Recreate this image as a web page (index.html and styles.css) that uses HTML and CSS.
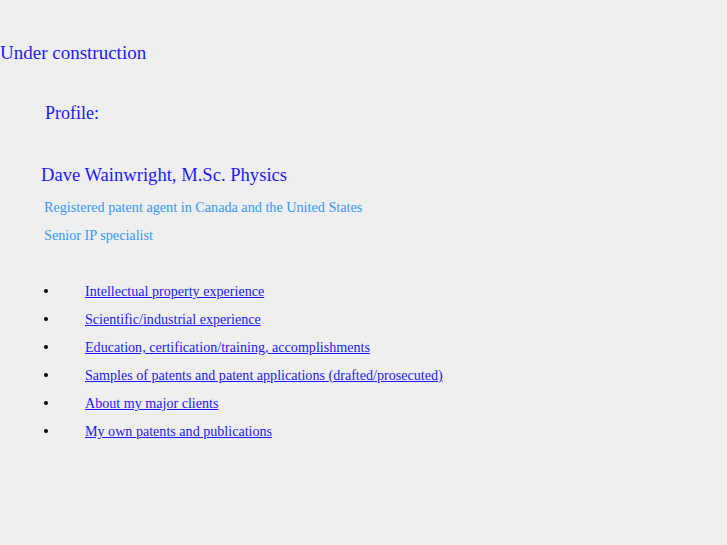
FILE: index.html
```html
<!DOCTYPE html>
<html lang="en">

<head>
    <meta charset="UTF-8" />
    <title>Dave Wainwright - Profile</title>
    <link rel="stylesheet" href="styles.css">
</head>

<body>
    <p class="notice">Under construction</p>

    <div class="profile">
        <h2>Profile:</h2>

        <h1>Dave Wainwright, M.Sc. Physics</h1>
        <p class="role">Registered patent agent in Canada and the United States</p>
        <p class="role">Senior IP specialist</p>

        <ul class="links">
            <li><a href="#">Intellectual property experience</a></li>
            <li><a href="#">Scientific/industrial experience</a></li>
            <li><a href="#">Education, certification/training, accomplishments</a></li>
            <li><a href="#">Samples of patents and patent applications (drafted/prosecuted)</a></li>
            <li><a href="#">About my major clients</a></li>
            <li><a href="#">My own patents and publications</a></li>
        </ul>
    </div>
</body>

</html>
```

FILE: styles.css
```css
* {
    box-sizing: border-box;
    margin: 0;
    padding: 0;
}

body {
    font-family: 'Liberation Serif', 'Times New Roman', serif;
    background-color: #efefef;
    color: #000;
    padding-top: 41px;
}

/* Header notice */
.notice {
    font-size: 19px;
    line-height: 24px;
    color: #1a1aff;
}

.profile {
    padding-left: 41px;
}

.profile h2 {
    font-weight: normal;
    font-size: 18px;
    line-height: 24px;
    color: #1a1aff;
    margin: 36px 0 0 4px;
}

.profile h1 {
    font-weight: normal;
    font-size: 18.6px;
    line-height: 24px;
    color: #1a1aff;
    margin-top: 38px;
}

.role {
    font-size: 14.2px;
    line-height: 28px;
    color: #3399ff;
    margin-left: 3px;
}

.role:first-of-type {
    margin-top: 6px;
}

/* Link list */
.links {
    list-style: none;
    margin-top: 28px;
}

.links li {
    display: flex;
    align-items: center;
    font-size: 14.1px;
    line-height: 28px;
}

.links li::before {
    content: "";
    width: 4px;
    height: 4px;
    margin: 0 37px 0 3px;
    border-radius: 50%;
    background-color: #000;
}

.links a {
    color: #1a1aff;
}
```
